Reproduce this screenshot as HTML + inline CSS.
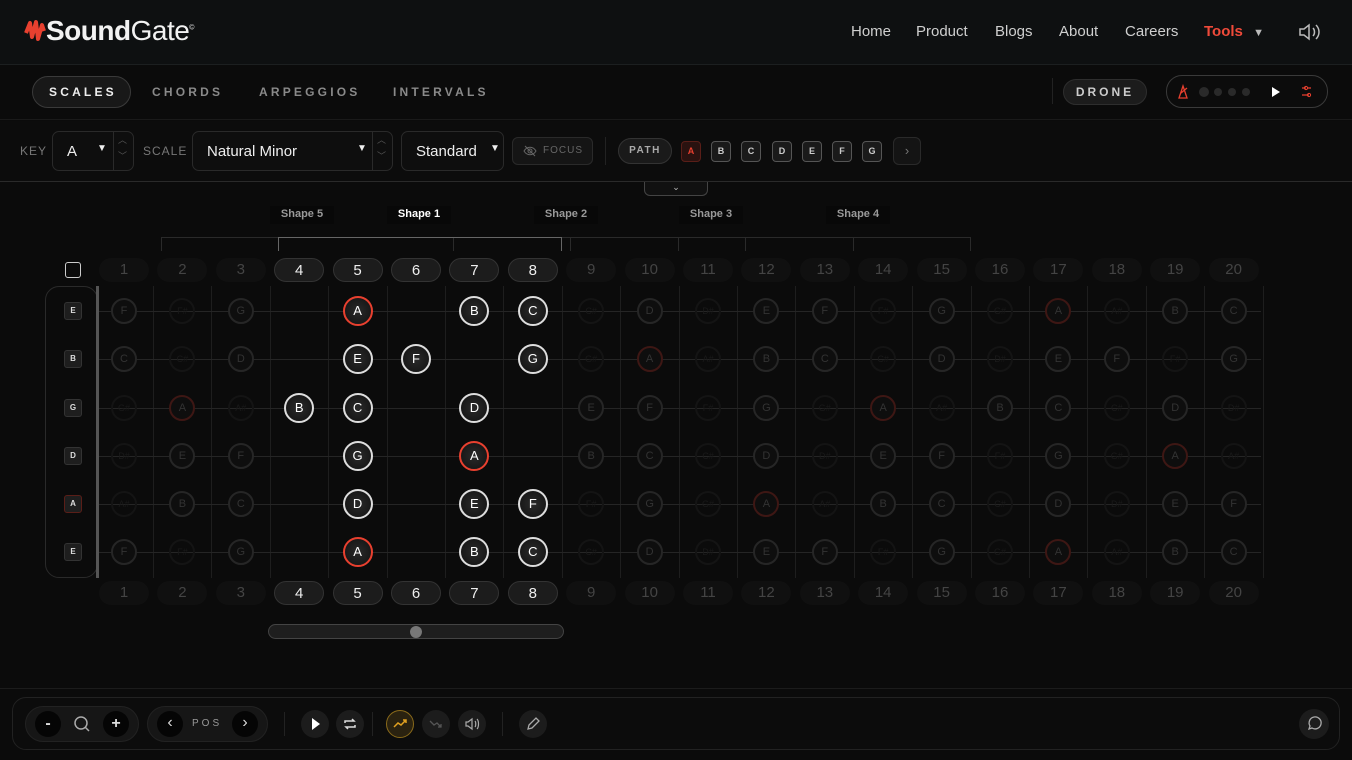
<!DOCTYPE html>
<html><head><meta charset="utf-8"><style>
*{box-sizing:border-box;margin:0;padding:0}
body{width:1352px;height:760px;overflow:hidden;background:#0b0b0b;font-family:"Liberation Sans",sans-serif;color:#ddd;position:relative}
.abs{position:absolute}
.hdr{left:0;top:0;width:1352px;height:65px;background:#0e1011;border-bottom:1px solid #1c1f20}
.logo{left:24px;top:15px;font-size:28px;color:#f2f2f2;letter-spacing:-0.5px}
.nav{top:23px;font-size:15px;color:#cfcfcf}
.tabs{left:0;top:66px;width:1352px;height:54px;border-bottom:1px solid #1a1a1a}
.tab{top:85px;font-size:12px;letter-spacing:3.2px;color:#8a8a8a;font-weight:bold}
.ctl{top:121px;left:0;width:1352px;height:61px;background:#0c0c0c;border-bottom:1px solid #2a2a2a}
.sel{border:1px solid #2a2a2a;border-radius:7px;background:#0e0e0e;height:40px;top:131px;font-size:15px;color:#eee;padding:11px 14px}
.lbl{top:144px;font-size:12px;color:#777;letter-spacing:1px}
.pk{top:141px;width:20px;height:21px;border:1px solid #555;border-radius:4px;background:#1a1a1a;font-size:9px;font-weight:bold;color:#ccc;text-align:center;line-height:19px}
.fn{width:50px;height:24px;border-radius:12px;text-align:center;line-height:24px;font-size:15px}
.fn.on{background:#1c1c1c;border:1px solid #333;color:#eee}
.fn.off{background:#101010;color:#444}
.n{border-radius:50%;text-align:center;font-size:13px}
.tb{border-radius:50%;background:#1c1c1c;width:28px;height:28px;top:710px}
.ud{position:absolute;font-size:9px;color:#555;line-height:9px}
</style></head><body>
<div class="abs hdr"></div>
<div class="abs logo"><svg width="22" height="24" viewBox="0 0 22 24" style="vertical-align:-3px"><path d="M2 14 L6 4 L8 18 L12 3 L14 20 L18 6 L20 12" stroke="#e8402f" stroke-width="4" fill="none" stroke-linejoin="round"/></svg><b>Sound</b>Gate<sup style="font-size:7px">©</sup></div>
<div class="abs nav" style="left:851px">Home</div>
<div class="abs nav" style="left:916px">Product</div>
<div class="abs nav" style="left:995px">Blogs</div>
<div class="abs nav" style="left:1059px">About</div>
<div class="abs nav" style="left:1125px">Careers</div>
<div class="abs nav" style="left:1204px;color:#ef4a3a;font-weight:bold">Tools <span style="color:#bbb;font-size:11px;margin-left:6px">▼</span></div>
<svg class="abs" style="left:1298px;top:22px" width="24" height="20" viewBox="0 0 24 20"><path d="M2 7h4l5-4v14l-5-4H2z M15 6c2 2 2 6 0 8 M18 3c4 4 4 10 0 14" stroke="#bbb" stroke-width="1.5" fill="none"/></svg>
<div class="abs tabs"></div>
<div class="abs" style="left:32px;top:76px;width:99px;height:32px;border:1px solid #3a3a3a;border-radius:16px;background:#181818"></div>
<div class="abs tab" style="left:49px;color:#eee">SCALES</div>
<div class="abs tab" style="left:152px">CHORDS</div>
<div class="abs tab" style="left:259px">ARPEGGIOS</div>
<div class="abs tab" style="left:393px">INTERVALS</div>
<div class="abs" style="left:1052px;top:78px;width:1px;height:26px;background:#222"></div>
<div class="abs" style="left:1063px;top:79px;width:84px;height:26px;border-radius:13px;background:#1c1c1c;border:1px solid #2e2e2e;font-size:12px;letter-spacing:3px;color:#ccc;font-weight:bold;text-align:center;line-height:24px">DRONE</div>
<div class="abs" style="left:1166px;top:75px;width:162px;height:33px;border-radius:16px;border:1px solid #3a3a3a;background:#0c0c0c"></div>
<svg class="abs" style="left:1176px;top:84px" width="160" height="16"><path d="M3 14 L7 2 L11 14 Z M5 9 L11 4" stroke="#e8402f" stroke-width="1.3" fill="none"/><circle cx="28" cy="8" r="5" fill="#2a2a2a"/><circle cx="42" cy="8" r="4" fill="#2a2a2a"/><circle cx="56" cy="8" r="4" fill="#2a2a2a"/><circle cx="70" cy="8" r="4" fill="#2a2a2a"/><path d="M96 3 L104 8 L96 13Z" fill="#fff"/><path d="M126 4h4 M131 4h4 M126 11h7 M134 11h1" stroke="#e8402f" stroke-width="1.3"/><circle cx="130" cy="4" r="1.6" stroke="#e8402f" fill="none"/><circle cx="133" cy="11" r="1.6" stroke="#e8402f" fill="none"/></svg>
<div class="abs ctl"></div>
<div class="abs lbl" style="left:20px">KEY</div>
<div class="abs sel" style="left:52px;width:82px">A<span style="position:absolute;left:44px;font-size:10px">▼</span><span style="position:absolute;left:60px;top:0;width:1px;height:38px;background:#2a2a2a"></span><span class="ud" style="left:65px;top:4px">︿</span><span class="ud" style="left:65px;top:20px">﹀</span></div>
<div class="abs lbl" style="left:143px">SCALE</div>
<div class="abs sel" style="left:192px;width:201px">Natural Minor<span style="position:absolute;left:164px;font-size:10px">▼</span><span style="position:absolute;left:179px;top:0;width:1px;height:38px;background:#2a2a2a"></span><span class="ud" style="left:184px;top:4px">︿</span><span class="ud" style="left:184px;top:20px">﹀</span></div>
<div class="abs sel" style="left:401px;width:103px">Standard<span style="position:absolute;left:88px;font-size:10px">▼</span></div>
<div class="abs" style="left:512px;top:137px;width:81px;height:28px;border:1px solid #2a2a2a;border-radius:6px;background:#151515;font-size:10px;color:#666;letter-spacing:1px;line-height:26px;padding-left:30px">FOCUS</div>
<svg class="abs" style="left:523px;top:145px" width="14" height="12"><path d="M1 6c3-5 9-5 12 0c-3 5-9 5-12 0z M2 1l10 10" stroke="#666" stroke-width="1" fill="none"/><circle cx="7" cy="6" r="2" stroke="#666" fill="none"/></svg>
<div class="abs" style="left:605px;top:137px;width:1px;height:28px;background:#222"></div>
<div class="abs" style="left:618px;top:138px;width:54px;height:26px;border-radius:13px;border:1px solid #333;background:#1a1a1a;font-size:10px;letter-spacing:1.5px;color:#aaa;text-align:center;line-height:24px;font-weight:bold">PATH</div>
<div class="abs pk" style="left:681px;color:#e8402f;background:#2a1210;border-color:#5a1e18">A</div>
<div class="abs pk" style="left:711px">B</div>
<div class="abs pk" style="left:741px">C</div>
<div class="abs pk" style="left:772px">D</div>
<div class="abs pk" style="left:802px">E</div>
<div class="abs pk" style="left:832px">F</div>
<div class="abs pk" style="left:862px">G</div>
<div class="abs" style="left:893px;top:137px;width:28px;height:28px;border:1px solid #2a2a2a;border-radius:6px;background:#141414;color:#777;text-align:center;line-height:26px;font-size:13px">›</div>
<div class="abs" style="left:644px;top:182px;width:64px;height:14px;border:1px solid #444;border-top:none;border-radius:0 0 6px 6px;background:#111;color:#bbb;font-size:9px;text-align:center;line-height:10px">⌄</div>
<div id="fb"></div>
<div class="abs" style="left:268px;top:624px;width:296px;height:15px;border-radius:8px;background:#1e1e1e;border:1px solid #444"></div>
<div class="abs" style="left:410px;top:626px;width:12px;height:12px;border-radius:50%;background:#777"></div>
<div class="abs" style="left:0;top:688px;width:1352px;height:1px;background:#1c1c1c"></div>
<div class="abs" style="left:12px;top:697px;width:1328px;height:53px;border:1px solid #222;border-radius:14px;background:#0c0c0c"></div>
<div class="abs" style="left:25px;top:706px;width:114px;height:36px;border-radius:18px;background:#161616;border:1px solid #222"></div>
<div class="abs" style="left:35px;top:711px;width:26px;height:26px;border-radius:50%;background:#050505;color:#ddd;text-align:center;line-height:25px;font-weight:bold">-</div>
<svg class="abs" style="left:73px;top:715px" width="18" height="18"><circle cx="8" cy="8" r="6" stroke="#aaa" stroke-width="1.5" fill="none"/><path d="M12 12l4 4" stroke="#aaa" stroke-width="1.5"/></svg>
<div class="abs" style="left:103px;top:711px;width:26px;height:26px;border-radius:50%;background:#050505;color:#ddd;text-align:center;line-height:26px;font-weight:bold">+</div>
<div class="abs" style="left:147px;top:706px;width:121px;height:36px;border-radius:18px;background:#161616;border:1px solid #222"></div>
<div class="abs" style="left:157px;top:711px;width:26px;height:26px;border-radius:50%;background:#050505;color:#ddd;text-align:center;line-height:24px;font-size:16px">‹</div>
<div class="abs" style="left:192px;top:718px;font-size:10px;letter-spacing:3px;color:#999">POS</div>
<div class="abs" style="left:232px;top:711px;width:26px;height:26px;border-radius:50%;background:#050505;color:#ddd;text-align:center;line-height:24px;font-size:16px">›</div>
<div class="abs" style="left:284px;top:712px;width:1px;height:24px;background:#222"></div>
<div class="abs tb" style="left:301px"><svg width="28" height="28"><path d="M11 8l8 6-8 6z" fill="#fff"/></svg></div>
<div class="abs tb" style="left:336px"><svg width="28" height="28"><path d="M9 13v-2h9l-2-2 M19 15v2h-9l2 2" stroke="#ddd" stroke-width="1.5" fill="none"/></svg></div>
<div class="abs" style="left:372px;top:712px;width:1px;height:24px;background:#222"></div>
<div class="abs tb" style="left:386px;background:#2a2210;border:1px solid #8a6a1a"><svg width="26" height="26"><path d="M7 16l4-4 3 2 5-5 M16 9h3v3" stroke="#e0a020" stroke-width="1.5" fill="none"/></svg></div>
<div class="abs tb" style="left:422px"><svg width="28" height="28"><path d="M8 11l4 4 3-2 4 4 M16 17h3v-3" stroke="#555" stroke-width="1.3" fill="none"/></svg></div>
<div class="abs tb" style="left:458px"><svg width="28" height="28"><path d="M8 12h2l4-3v10l-4-3H8z M17 11c1 1 1 5 0 6 M19 9c2 2 2 8 0 10" stroke="#aaa" stroke-width="1.2" fill="none"/></svg></div>
<div class="abs" style="left:502px;top:712px;width:1px;height:24px;background:#222"></div>
<div class="abs tb" style="left:519px"><svg width="28" height="28"><path d="M9 19l1-4 7-7 3 3-7 7z" stroke="#aaa" stroke-width="1.3" fill="none"/></svg></div>
<div class="abs tb" style="left:1299px;width:30px;height:30px;top:709px"><svg width="30" height="30"><path d="M10 20l1-3a6 6 0 1 1 2 2z" stroke="#aaa" stroke-width="1.3" fill="none"/></svg></div>
<script>
var h='';
var X=function(f){return 124+(f-1)*58.4;};
var notes=['A','A#','B','C','C#','D','D#','E','F','F#','G','G#'];
var open=[7,2,10,5,0,7];var sn=['E','B','G','D','A','E'];
var scale={A:1,B:1,C:1,D:1,E:1,F:1,G:1};
var SY=[311,359,408,456,504,552];
[['Shape 5',302,'#999'],['Shape 1',419,'#fff'],['Shape 2',566,'#999'],['Shape 3',711,'#999'],['Shape 4',858,'#999']].forEach(function(s){
h+='<div class="abs" style="left:'+(s[1]-32)+'px;top:206px;width:64px;height:18px;background:#080808;font-size:11px;font-weight:bold;color:'+s[2]+';text-align:center;line-height:17px">'+s[0]+'</div>';});
h+='<div class="abs" style="left:161px;top:237px;width:809px;height:1px;background:#2a2a2a"></div>';
[161,278,453,561,570,678,745,853,970].forEach(function(x){h+='<div class="abs" style="left:'+x+'px;top:237px;width:1px;height:14px;background:#2a2a2a"></div>';});
h+='<div class="abs" style="left:278px;top:237px;width:284px;height:14px;border:1px solid #666;border-bottom:none"></div>';
h+='<div class="abs" style="left:65px;top:262px;width:16px;height:16px;border:1.5px solid #ccc;border-radius:3px"></div>';
for(var f=1;f<=20;f++){var on=f>=4&&f<=8;
[258,581].forEach(function(y){h+='<div class="abs fn '+(on?'on':'off')+'" style="left:'+(X(f)-25)+'px;top:'+y+'px">'+f+'</div>';});
h+='<div class="abs" style="left:'+Math.round(X(f)+29)+'px;top:286px;width:1px;height:292px;background:#1e1e1e"></div>';}
h+='<div class="abs" style="left:45px;top:286px;width:53px;height:292px;border:1px solid #2a2a2a;border-radius:14px"></div>';
h+='<div class="abs" style="left:96px;top:286px;width:3px;height:292px;background:#555"></div>';
for(var s=0;s<6;s++){var y=SY[s];
h+='<div class="abs" style="left:99px;top:'+y+'px;width:1162px;height:1px;background:#252525"></div>';
var r=sn[s]=='A';
h+='<div class="abs" style="left:64px;top:'+(y-9)+'px;width:18px;height:18px;border-radius:3px;background:#1e1e1e;border:1px solid '+(r?'#5a1e18':'#333')+';font-size:8px;font-weight:bold;color:#ddd;text-align:center;line-height:16px">'+sn[s]+'</div>';
for(var f=1;f<=20;f++){var nm=notes[(open[s]+f)%12];var x=X(f);var on=f>=4&&f<=8;
if(scale[nm]){ if(on){var rt=nm=='A';
h+='<div class="abs n" style="left:'+(x-15)+'px;top:'+(y-15)+'px;width:30px;height:30px;border:2px solid '+(rt?'#e8402f':'#ddd')+';background:radial-gradient(#2a2a2a,#111);color:#fff;line-height:26px">'+nm+'</div>';}
else{var rt=nm=='A';
h+='<div class="abs n" style="left:'+(x-13)+'px;top:'+(y-13)+'px;width:26px;height:26px;border:2px solid '+(rt?'#3e1714':'#262626')+';background:#0e0e0e;color:#333;font-size:11px;line-height:22px">'+nm+'</div>';}}
else if(!on){h+='<div class="abs n" style="left:'+(x-13)+'px;top:'+(y-13)+'px;width:26px;height:26px;border:2px solid #141414;color:#1a1a1a;font-size:9px;line-height:22px">'+nm+'</div>';}
}}
document.getElementById('fb').innerHTML=h;
</script>
</body></html>
